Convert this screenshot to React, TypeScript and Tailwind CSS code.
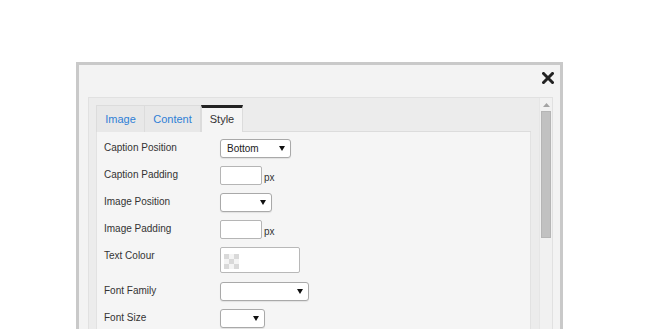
function Caret() {
  return (
    <svg width="6" height="5" viewBox="0 0 6 5" className="shrink-0">
      <path d="M0 0H6L3 5Z" fill="#111" />
    </svg>
  );
}

function SelectBox({ width, value }: { width: number; value?: string }) {
  return (
    <div
      className="h-[19px] border border-[#a9a9a9] rounded-[3px] bg-white flex items-center justify-between pl-[6px] pr-[5px] text-[10px] text-[#222] shadow-[0_1px_1px_rgba(0,0,0,0.08)]"
      style={{ width }}
    >
      <span>{value}</span>
      <Caret />
    </div>
  );
}

function PxInput() {
  return (
    <div className="flex items-end gap-[2px]">
      <div className="w-[42px] h-[19px] border border-[#b5b5b5] rounded-[2px] bg-white" />
      <span className="text-[10px] leading-[14px] text-[#333]">px</span>
    </div>
  );
}

function Checker() {
  const cells = [0, 1, 2, 3, 4, 5, 6, 7, 8];
  return (
    <div className="grid grid-cols-3 w-[15px] h-[15px]">
      {cells.map((i) => (
        <div key={i} className={i % 2 === 0 ? "bg-[#d9d9d9]" : "bg-[#f4f4f4]"} />
      ))}
    </div>
  );
}

function Row({ label, children, gap = 8 }: { label: string; children: React.ReactNode; gap?: number }) {
  return (
    <div className="flex items-start" style={{ marginBottom: gap }}>
      <div className="w-[123px] shrink-0 pl-[7px] pt-[1px] text-[10px] leading-[16px] text-[#333]">{label}</div>
      {children}
    </div>
  );
}

export default function App() {
  return (
    <div className="h-[329px] overflow-hidden bg-white pt-[62px] pl-[76px] font-['Liberation_Sans',Arial,sans-serif]">
      <div className="w-[487px] h-[290px] border-[3px] border-b-0 border-[#c9c9c9] bg-[#f3f3f3] flex flex-col">
        {/* Header with close button */}
        <div className="h-[32px] flex justify-end items-start pt-[7px] pr-[6px]">
          <svg width="12" height="12" viewBox="0 0 12 12">
            <path d="M1.5 1.5L10.5 10.5M10.5 1.5L1.5 10.5" stroke="#222" strokeWidth="3" strokeLinecap="square" />
          </svg>
        </div>

        {/* Scrolling panel */}
        <div className="ml-[9px] mr-[7px] flex-1 border border-[#e1e1e1] border-b-0 bg-[#ececec] flex">
          <div className="flex-1 pl-[7px] pt-[7px] pr-[8px] flex flex-col">
            {/* Tabs */}
            <div className="flex h-[27px] text-[11px]">
              <div className="w-[49px] border border-b-0 border-[#dcdcdc] bg-[#e8e8e8] flex items-center justify-center text-[#2f7fd6]">
                Image
              </div>
              <div className="w-[56px] border border-b-0 border-l-0 border-[#dcdcdc] bg-[#e8e8e8] flex items-center justify-center text-[#2f7fd6]">
                Content
              </div>
              <div className="w-[42px] border-t-[3px] border-t-[#222] border-x border-x-[#dcdcdc] bg-[#f5f5f5] flex items-center justify-center text-[#333] pb-[1px]">
                Style
              </div>
              <div className="flex-1 border-b border-[#dcdcdc]" />
            </div>

            {/* Content */}
            <div className="flex-1 bg-[#f5f5f5] border-x border-[#e2e2e2] pt-[7px]">
              <Row label="Caption Position">
                <SelectBox width={71} value="Bottom" />
              </Row>
              <Row label="Caption Padding">
                <PxInput />
              </Row>
              <Row label="Image Position">
                <SelectBox width={52} />
              </Row>
              <Row label="Image Padding">
                <PxInput />
              </Row>
              <Row label="Text Colour" gap={9}>
                <div className="w-[80px] h-[26px] border border-[#b8b8b8] rounded-[2px] bg-white pl-[3px] pt-[6px]">
                  <Checker />
                </div>
              </Row>
              <Row label="Font Family">
                <SelectBox width={89} />
              </Row>
              <Row label="Font Size">
                <SelectBox width={45} />
              </Row>
            </div>
          </div>

          {/* Scrollbar */}
          <div className="w-[13px] bg-[#f1f1f1] border-l border-[#e6e6e6] flex flex-col items-center pt-[5px]">
            <svg width="7" height="4" viewBox="0 0 7 4">
              <path d="M0 4H7L3.5 0Z" fill="#a3a3a3" />
            </svg>
            <div className="mt-[4px] w-[10px] h-[127px] bg-[#c1c1c1] border border-[#b5b5b5]" />
            <div className="flex-1" />
            <svg width="7" height="4" viewBox="0 0 7 4" className="mb-[4px]">
              <path d="M0 0H7L3.5 4Z" fill="#222" />
            </svg>
          </div>
        </div>
      </div>
    </div>
  );
}
